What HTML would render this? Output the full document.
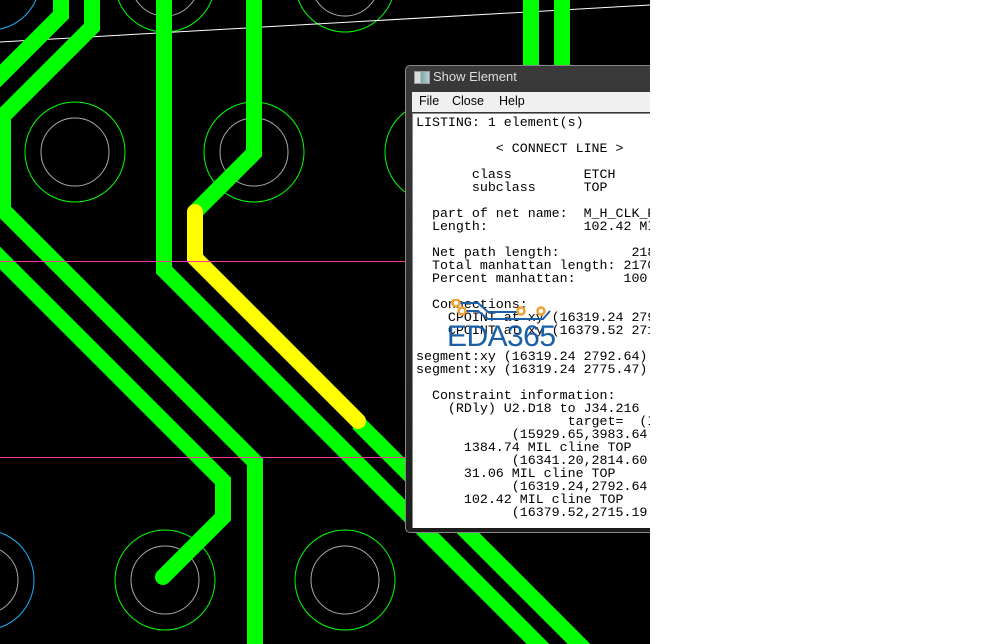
<!DOCTYPE html>
<html><head><meta charset="utf-8"><style>
html,body{margin:0;padding:0;width:1008px;height:644px;overflow:hidden;background:#fff;}
#pcb{position:absolute;left:0;top:0;width:650px;height:644px;background:#000;overflow:hidden;}
#win{position:absolute;left:405px;top:65px;width:260px;height:468px;background:linear-gradient(#3a3a3a,#1c1c1c);border:1px solid #888;border-radius:5px 0 0 5px;box-sizing:border-box;overflow:hidden;}
#title{position:absolute;left:27px;top:3px;font:13px "Liberation Sans",sans-serif;color:#ddd;}
#ticon{position:absolute;left:8px;top:5px;width:14px;height:11px;background:linear-gradient(90deg,#ddd 40%,#7a9 40%,#bcd);border:1px solid #999;}
#menu{position:absolute;left:6px;top:26px;width:260px;height:20px;background:#f0f0f0;font:12.5px "Liberation Sans",sans-serif;color:#000;}
#menu span{position:absolute;top:2px;}
#txt{position:absolute;left:6px;top:47px;width:260px;height:415px;background:#fff;border-top:1px solid #888;border-left:1px solid #888;box-sizing:border-box;overflow:hidden;}
pre{margin:0;position:absolute;left:3px;top:2px;font:13.3px/13px "Liberation Mono",monospace;color:#000;white-space:pre;}
#clip{position:absolute;left:650px;top:0;width:358px;height:644px;background:#fff;}
</style></head><body>
<div id="pcb">
<svg width="650" height="644" viewBox="0 0 650 644">
<g fill="none" stroke-width="1">
<circle cx="-10" cy="-20" r="50" stroke="#1ab0ff"/>
<circle cx="165" cy="-18" r="50" stroke="#0f0"/><circle cx="165" cy="-18" r="34" stroke="#aaa"/>
<circle cx="345" cy="-18" r="50" stroke="#0f0"/><circle cx="345" cy="-18" r="34" stroke="#aaa"/>
<circle cx="75" cy="152" r="50" stroke="#0f0"/><circle cx="75" cy="152" r="34" stroke="#aaa"/>
<circle cx="254" cy="152" r="50" stroke="#0f0"/><circle cx="254" cy="152" r="34" stroke="#aaa"/>
<circle cx="435" cy="152" r="50" stroke="#0f0"/>
<circle cx="-16" cy="580" r="50" stroke="#1ab0ff"/><circle cx="-16" cy="580" r="34" stroke="#aaa"/>
<circle cx="165" cy="580" r="50" stroke="#0f0"/><circle cx="165" cy="580" r="34" stroke="#aaa"/>
<circle cx="345" cy="580" r="50" stroke="#0f0"/><circle cx="345" cy="580" r="34" stroke="#aaa"/>
</g>
<line x1="0" y1="42" x2="650" y2="5" stroke="#fff" stroke-width="1"/>
<g fill="none" stroke="#00ff00" stroke-width="16" stroke-linejoin="miter">
<polyline points="61,-5 61,15 -10,86"/>
<polyline points="92,-5 92,27 3,116 3,210 255,462 255,650"/>
<polyline points="-20,238 223,481 223,517 163,577" stroke-linecap="round"/>
<polyline points="164,-5 164,270 580,686"/>
<polyline points="254,-5 254,153 195,212" stroke-linecap="round"/>
<polyline points="358,423 600,665"/>
<polyline points="531,-5 531,70"/>
<polyline points="562,-5 562,70"/>
</g>
<polyline points="195,212 195,258 358,421" fill="none" stroke="#ffff00" stroke-width="16" stroke-linecap="round"/>
<rect x="0" y="261" width="650" height="1" fill="#ff3399"/>
<rect x="0" y="457" width="650" height="1" fill="#ff3399"/>
</svg>
<div id="win">
<div id="ticon"></div><div id="title">Show Element</div>
<div id="menu"><span style="left:7px">File</span><span style="left:40px">Close</span><span style="left:87px">Help</span></div>
<div id="txt"><pre>LISTING: 1 element(s)

          &lt; CONNECT LINE &gt;

       class         ETCH
       subclass      TOP

  part of net name:  M_H_CLK_P
  Length:            102.42 MIL

  Net path length:         2187
  Total manhattan length: 2170
  Percent manhattan:      100

  Connections:
    CPOINT at xy (16319.24 2792
    CPOINT at xy (16379.52 2715

segment:xy (16319.24 2792.64)
segment:xy (16319.24 2775.47)

  Constraint information:
    (RDly) U2.D18 to J34.216
                   target=  (I
            (15929.65,3983.64
      1384.74 MIL cline TOP
            (16341.20,2814.60
      31.06 MIL cline TOP
            (16319.24,2792.64
      102.42 MIL cline TOP
            (16379.52,2715.19</pre>
<svg style="position:absolute;left:35px;top:185px" width="120" height="50">
<g fill="none" stroke="#1a5fa8" stroke-width="2"><polyline points="8,4 30,4 40,13 70,13"/><polyline points="14,12 30,12 40,20 95,20 102,12"/></g>
<g fill="#fff" stroke="#f0a030" stroke-width="2.5"><circle cx="8" cy="4" r="3.5"/><circle cx="14" cy="12" r="3.5"/><circle cx="73" cy="12" r="3.5"/><circle cx="93" cy="12" r="3.5"/></g>
<text x="-1" y="47" font-family="Liberation Sans,sans-serif" font-size="30" fill="#1a5fa8" textLength="109">EDA365</text>
</svg>
</div>
</div>
</div>
<div id="clip"></div>
</body></html>
